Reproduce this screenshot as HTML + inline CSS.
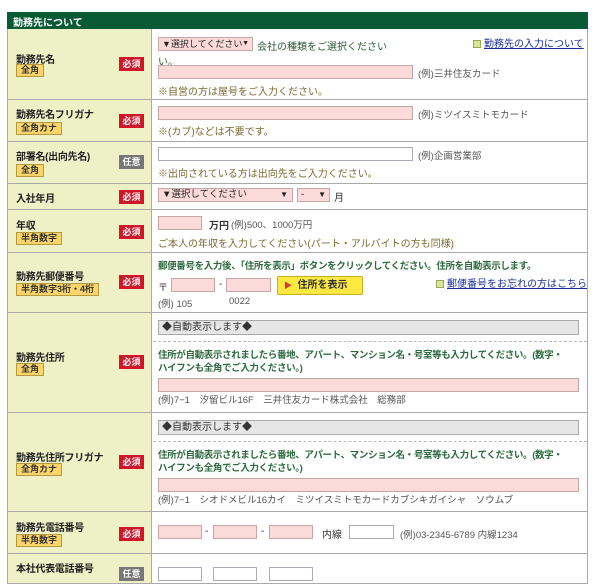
<!DOCTYPE html>
<html><head><meta charset="utf-8"><style>
*{margin:0;padding:0;box-sizing:border-box}
body{width:600px;height:571px;background:#fff;position:relative;overflow:hidden;font-family:"Liberation Sans","Noto Sans CJK JP",sans-serif;font-size:10px;color:#333}
.a{position:absolute;white-space:nowrap}
.hd{left:7px;top:12px;width:581px;height:17px;background:#0b5a36;color:#fff;font-weight:bold;font-size:10px;padding:2px 0 0 6px}
.lc{position:absolute;left:7px;width:145px;background:#eef0c6;border-left:1px solid #aaa;border-bottom:1px solid #aaa;border-right:1px solid #aaa}
.rc{position:absolute;left:152px;width:436px;background:#fff;border-right:1px solid #aaa;border-bottom:1px solid #aaa}
.lb{font-weight:bold;font-size:10px;color:#222;letter-spacing:-0.3px}
.tg{background:#fbd46a;border:1px solid #b8983c;font-size:9px;font-weight:bold;padding:0 4px;line-height:11px;color:#333}
.bd{left:119px;width:25px;height:14px;background:#d2162a;color:#fff;font-size:9px;font-weight:bold;text-align:center;line-height:14px}
.gy{background:#777}
.pk{position:absolute;background:#fcdada;border:1px solid #c4a8a8;height:14px;overflow:hidden;white-space:nowrap}
.wh{position:absolute;background:#fff;border:1px solid #aab;height:14px}
.gb{position:absolute;background:#e6e6e6;border:1px solid #aaa;height:15px;font-size:10px;padding-left:3px;line-height:13px}
.nt{color:#7a6a30;font-size:10px}
.gt{color:#2d6a40;font-weight:bold;font-size:9.5px;letter-spacing:-0.35px}
.ex{color:#555;font-size:9.5px}
.lk{color:#1a2e9a;text-decoration:underline;font-size:10px}
.ic{display:inline-block;width:8px;height:8px;background:#d9e59a;border:1px solid #98a850;margin-right:3px;vertical-align:-1px}
.dl{position:absolute;left:153px;width:434px;border-top:1px dashed #bbb}
.sl{font-size:9.5px;line-height:12px;padding-left:3px;color:#222}
</style></head><body>
<div class="a hd">勤務先について</div>

<div class="lc" style="top:29px;height:71px"></div><div class="rc" style="top:29px;height:71px"></div>
<div class="lc" style="top:100px;height:42px"></div><div class="rc" style="top:100px;height:42px"></div>
<div class="lc" style="top:142px;height:42px"></div><div class="rc" style="top:142px;height:42px"></div>
<div class="lc" style="top:184px;height:26px"></div><div class="rc" style="top:184px;height:26px"></div>
<div class="lc" style="top:210px;height:43px"></div><div class="rc" style="top:210px;height:43px"></div>
<div class="lc" style="top:253px;height:60px"></div><div class="rc" style="top:253px;height:60px"></div>
<div class="lc" style="top:313px;height:100px"></div><div class="rc" style="top:313px;height:100px"></div>
<div class="lc" style="top:413px;height:99px"></div><div class="rc" style="top:413px;height:99px"></div>
<div class="lc" style="top:512px;height:42px"></div><div class="rc" style="top:512px;height:42px"></div>
<div class="lc" style="top:554px;height:30px"></div><div class="rc" style="top:554px;height:30px"></div>

<!-- row1 -->
<div class="a lb" style="left:16px;top:51px">勤務先名</div>
<div class="a tg" style="left:16px;top:64px">全角</div>
<div class="a bd" style="top:57px">必須</div>
<div class="pk sl" style="left:158px;top:37px;width:95px;font-size:9px">▼選択してください<span style="position:absolute;right:3px;font-size:7px">▼</span></div>
<div class="a" style="left:257px;top:38px;color:#2d5a3a;font-size:10px">会社の種類をご選択ください</div>
<div class="a" style="left:158px;top:53px;color:#2d5a3a">い。</div>
<div class="a" style="left:473px;top:35px"><span class="ic"></span><span class="lk">勤務先の入力について</span></div>
<div class="pk" style="left:158px;top:65px;width:255px"></div>
<div class="a ex" style="left:418px;top:66px">(例)三井住友カード</div>
<div class="a nt" style="left:158px;top:83px">※自営の方は屋号をご入力ください。</div>

<!-- row2 -->
<div class="a lb" style="left:16px;top:106px">勤務先名フリガナ</div>
<div class="a tg" style="left:16px;top:122px">全角カナ</div>
<div class="a bd" style="top:114px">必須</div>
<div class="pk" style="left:158px;top:106px;width:255px"></div>
<div class="a ex" style="left:418px;top:107px">(例)ミツイスミトモカード</div>
<div class="a nt" style="left:158px;top:123px">※(カブ)などは不要です。</div>

<!-- row3 -->
<div class="a lb" style="left:16px;top:148px">部署名(出向先名)</div>
<div class="a tg" style="left:16px;top:164px">全角</div>
<div class="a bd gy" style="top:155px">任意</div>
<div class="wh" style="left:158px;top:147px;width:255px"></div>
<div class="a ex" style="left:418px;top:148px">(例)企画営業部</div>
<div class="a nt" style="left:158px;top:165px">※出向されている方は出向先をご入力ください。</div>

<!-- row4 -->
<div class="a lb" style="left:16px;top:190px">入社年月</div>
<div class="a bd" style="top:190px">必須</div>
<div class="pk sl" style="left:158px;top:188px;width:135px">▼選択してください<span style="position:absolute;right:4px;font-size:8px">▼</span></div>
<div class="pk sl" style="left:297px;top:188px;width:33px">-<span style="position:absolute;right:3px;font-size:8px">▼</span></div>
<div class="a" style="left:334px;top:189px">月</div>

<!-- row5 -->
<div class="a lb" style="left:16px;top:217px">年収</div>
<div class="a tg" style="left:16px;top:232px">半角数字</div>
<div class="a bd" style="top:225px">必須</div>
<div class="pk" style="left:158px;top:216px;width:44px"></div>
<div class="a" style="left:209px;top:217px;font-weight:bold">万円</div>
<div class="a ex" style="left:231px;top:217px">(例)500、1000万円</div>
<div class="a nt" style="left:158px;top:235px">ご本人の年収を入力してください(パート・アルバイトの方も同様)</div>

<!-- row6 -->
<div class="a lb" style="left:16px;top:268px">勤務先郵便番号</div>
<div class="a tg" style="left:16px;top:283px">半角数字3桁・4桁</div>
<div class="a bd" style="top:275px">必須</div>
<div class="a gt" style="left:158px;top:258px">郵便番号を入力後、「住所を表示」ボタンをクリックしてください。住所を自動表示します。</div>
<div class="a" style="left:158px;top:279px">〒</div>
<div class="pk" style="left:171px;top:278px;width:44px"></div>
<div class="a" style="left:219px;top:279px">-</div>
<div class="pk" style="left:226px;top:278px;width:45px"></div>
<div class="a" style="left:277px;top:276px;width:86px;height:19px;background:#fbe840;border:1px solid #c9b020;border-radius:2px;font-weight:bold;font-size:10px;line-height:17px;padding-left:6px"><span style="color:#d33;font-size:8px">▶</span>&nbsp;&nbsp;住所を表示</div>
<div class="a ex" style="left:158px;top:296px">(例) 105</div>
<div class="a ex" style="left:229px;top:296px">0022</div>
<div class="a" style="left:436px;top:275px"><span class="ic"></span><span class="lk">郵便番号をお忘れの方はこちら</span></div>

<!-- row7 -->
<div class="a lb" style="left:16px;top:349px">勤務先住所</div>
<div class="a tg" style="left:16px;top:363px">全角</div>
<div class="a bd" style="top:355px">必須</div>
<div class="gb" style="left:158px;top:320px;width:421px">◆自動表示します◆</div>
<div class="dl" style="top:341px"></div>
<div class="a gt" style="left:158px;top:349px;line-height:13px">住所が自動表示されましたら番地、アパート、マンション名・号室等も入力してください。(数字・<br>ハイフンも全角でご入力ください。)</div>
<div class="pk" style="left:158px;top:378px;width:421px"></div>
<div class="a ex" style="left:158px;top:392px">(例)7−1　汐留ビル16F　三井住友カード株式会社　総務部</div>

<!-- row8 -->
<div class="a lb" style="left:16px;top:449px">勤務先住所フリガナ</div>
<div class="a tg" style="left:16px;top:463px">全角カナ</div>
<div class="a bd" style="top:455px">必須</div>
<div class="gb" style="left:158px;top:420px;width:421px">◆自動表示します◆</div>
<div class="dl" style="top:441px"></div>
<div class="a gt" style="left:158px;top:449px;line-height:13px">住所が自動表示されましたら番地、アパート、マンション名・号室等も入力してください。(数字・<br>ハイフンも全角でご入力ください。)</div>
<div class="pk" style="left:158px;top:478px;width:421px"></div>
<div class="a ex" style="left:158px;top:492px">(例)7−1　シオドメビル16カイ　ミツイスミトモカードカブシキガイシャ　ソウムブ</div>

<!-- row9 -->
<div class="a lb" style="left:16px;top:519px">勤務先電話番号</div>
<div class="a tg" style="left:16px;top:534px">半角数字</div>
<div class="a bd" style="top:527px">必須</div>
<div class="pk" style="left:158px;top:525px;width:44px"></div>
<div class="a" style="left:205px;top:526px">-</div>
<div class="pk" style="left:213px;top:525px;width:44px"></div>
<div class="a" style="left:261px;top:526px">-</div>
<div class="pk" style="left:269px;top:525px;width:44px"></div>
<div class="a" style="left:322px;top:526px">内線</div>
<div class="wh" style="left:349px;top:525px;width:45px"></div>
<div class="a ex" style="left:400px;top:527px">(例)03-2345-6789 内線1234</div>

<!-- row10 -->
<div class="a lb" style="left:16px;top:560px">本社代表電話番号</div>
<div class="a bd gy" style="top:567px">任意</div>
<div class="wh" style="left:158px;top:567px;width:44px"></div>
<div class="wh" style="left:213px;top:567px;width:44px"></div>
<div class="wh" style="left:269px;top:567px;width:44px"></div>
</body></html>
